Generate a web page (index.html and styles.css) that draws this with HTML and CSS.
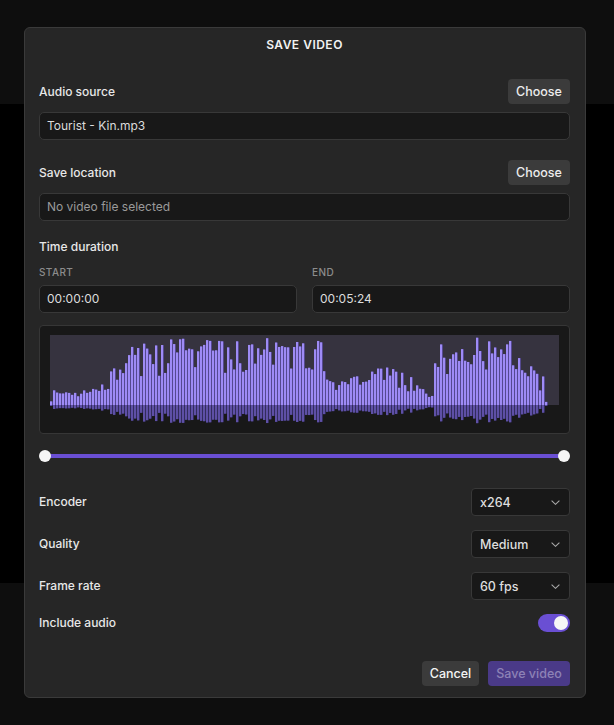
FILE: index.html
```html
<!DOCTYPE html>
<html lang="en">
<head>
<meta charset="utf-8">
<title>Save video</title>
<link rel="stylesheet" href="styles.css">
<script src="script.js" defer></script>
</head>
<body>
<div class="app">
  <div class="app-top"></div>
  <div class="app-main"></div>
  <div class="app-bottom"></div>
</div>

<div class="modal">
  <h2 class="modal-title">SAVE VIDEO</h2>

  <div class="field-head">
    <span class="label">Audio source</span>
    <button class="btn">Choose</button>
  </div>
  <div class="input">Tourist - Kin.mp3</div>

  <div class="field-head second">
    <span class="label">Save location</span>
    <button class="btn">Choose</button>
  </div>
  <div class="input placeholder">No video file selected</div>

  <div class="label duration-label">Time duration</div>
  <div class="time-grid">
    <div class="time-col">
      <div class="sublabel">START</div>
      <div class="input">00:00:00</div>
    </div>
    <div class="time-col">
      <div class="sublabel">END</div>
      <div class="input">00:05:24</div>
    </div>
  </div>

  <div class="wave-box">
    <svg id="wave" class="wave" viewBox="0 0 509 89" width="509" height="89" preserveAspectRatio="none">
      <rect x="0" y="0" width="509" height="70" fill="#36333f"></rect>
    </svg>
  </div>

  <div class="range">
    <div class="range-track"></div>
    <span class="thumb thumb-start"></span>
    <span class="thumb thumb-end"></span>
  </div>

  <div class="settings">
    <div class="setting-row">
      <span class="label">Encoder</span>
      <div class="select"><span>x264</span>
        <svg class="chev" viewBox="0 0 9 5" width="9" height="5"><polyline points="0.6,0.6 4.5,4.3 8.4,0.6" fill="none" stroke="#a8a8a8" stroke-width="1.1"/></svg>
      </div>
    </div>
    <div class="setting-row">
      <span class="label">Quality</span>
      <div class="select"><span>Medium</span>
        <svg class="chev" viewBox="0 0 9 5" width="9" height="5"><polyline points="0.6,0.6 4.5,4.3 8.4,0.6" fill="none" stroke="#a8a8a8" stroke-width="1.1"/></svg>
      </div>
    </div>
    <div class="setting-row">
      <span class="label">Frame rate</span>
      <div class="select"><span>60 fps</span>
        <svg class="chev" viewBox="0 0 9 5" width="9" height="5"><polyline points="0.6,0.6 4.5,4.3 8.4,0.6" fill="none" stroke="#a8a8a8" stroke-width="1.1"/></svg>
      </div>
    </div>
  </div>

  <div class="toggle-row">
    <span class="label">Include audio</span>
    <span class="toggle"><span class="knob"></span></span>
  </div>

  <div class="actions">
    <button class="btn btn-cancel">Cancel</button>
    <button class="btn btn-primary">Save video</button>
  </div>
</div>
</body>
</html>
```

FILE: styles.css
```css
html, body {
  margin: 0;
  padding: 0;
}
body {
  width: 614px;
  height: 725px;
  overflow: hidden;
  position: relative;
  font-family: Inter, "Noto Sans", sans-serif;
  color: #e6e6e6;
  background: #000;
}
.app {
  display: flex;
  flex-direction: column;
  height: 725px;
}
.app-top { height: 104px; background: #0e0e0e; }
.app-main { height: 479px; background: #000; }
.app-bottom { flex: 1; background: #0e0e0e; }

.modal {
  position: absolute;
  left: 24px;
  top: 27px;
  width: 562px;
  box-sizing: border-box;
  background: #262626;
  border: 1px solid #3a3a3a;
  border-radius: 6px;
  padding: 0 15px 11px 14px;
}
.modal-title {
  margin: 0;
  padding-top: 9px;
  font-size: 12px;
  line-height: 16px;
  font-weight: 600;
  letter-spacing: 0.5px;
  text-align: center;
  color: #f2f2f2;
}
.label {
  font-size: 12px;
  font-weight: 500;
  color: #e8e8e8;
  line-height: 16px;
}
.field-head {
  margin-top: 26px;
  height: 25px;
  display: flex;
  align-items: center;
  justify-content: space-between;
}
.field-head.second { margin-top: 20px; }

.btn {
  font-family: inherit;
  font-size: 12.5px;
  font-weight: 500;
  height: 25px;
  border: none;
  border-radius: 4px;
  background: #3b3b3b;
  color: #ececec;
  padding: 0 8px;
  line-height: 25px;
  cursor: pointer;
}
.field-head .btn { width: 62px; padding: 0; }

.input {
  margin-top: 8px;
  height: 28px;
  box-sizing: border-box;
  background: #181818;
  border: 1px solid #383838;
  border-radius: 5px;
  padding: 0 7px;
  font-size: 12px;
  line-height: 26px;
  color: #dcdcdc;
}
.input.placeholder { color: #9a9a9a; }

.duration-label {
  display: block;
  margin-top: 18px;
}
.time-grid {
  margin-top: 11px;
  display: grid;
  grid-template-columns: 1fr 1fr;
  column-gap: 15px;
}
.sublabel {
  font-size: 10px;
  line-height: 12px;
  font-weight: 500;
  letter-spacing: 0.4px;
  color: #8c8c8c;
}
.time-col .input { margin-top: 7px; }

.wave-box {
  margin-top: 12px;
  height: 109px;
  box-sizing: border-box;
  background: #181818;
  border: 1px solid #363636;
  border-radius: 4px;
  padding: 9px 10px;
}
.wave {
  display: block;
  width: 509px;
  height: 89px;
}

.range {
  position: relative;
  margin-top: 16px;
  height: 12px;
  padding: 0 6px;
  display: flex;
  align-items: center;
}
.range-track {
  flex: 1;
  height: 4px;
  border-radius: 2px;
  background: #6a4fd3;
}
.thumb {
  position: absolute;
  top: 0;
  width: 12px;
  height: 12px;
  border-radius: 50%;
  background: #f6f6f6;
}
.thumb-start { left: 0; }
.thumb-end { right: 0; }

.settings {
  margin-top: 26px;
  display: flex;
  flex-direction: column;
  gap: 14px;
}
.setting-row {
  height: 28px;
  display: flex;
  align-items: center;
  justify-content: space-between;
}
.select {
  width: 99px;
  height: 28px;
  box-sizing: border-box;
  background: #181818;
  border: 1px solid #383838;
  border-radius: 4px;
  padding: 0 9px 0 8px;
  display: flex;
  align-items: center;
  justify-content: space-between;
  font-size: 12.5px;
  font-weight: 500;
  color: #dedede;
}
.chev { display: block; }

.toggle-row {
  margin-top: 14px;
  height: 18px;
  display: flex;
  align-items: center;
  justify-content: space-between;
}
.toggle {
  width: 32px;
  height: 18px;
  border-radius: 9px;
  background: #6a4fd3;
  display: flex;
  align-items: center;
  justify-content: flex-end;
  padding: 0 2px;
  box-sizing: border-box;
}
.knob {
  width: 14px;
  height: 14px;
  border-radius: 50%;
  background: #f6f6f6;
}

.actions {
  margin-top: 29px;
  display: flex;
  justify-content: flex-end;
  gap: 9px;
}
.btn-cancel { width: 57px; padding: 0; color: #f4f4f4; }
.btn-primary {
  width: 82px;
  padding: 0;
  background: #4a3a88;
  color: #8d82b6;
}
```

FILE: script.js
```js
(function () {
  var svg = document.getElementById('wave');
  if (!svg) return;
  var NS = 'http://www.w3.org/2000/svg';
  var pts = [
    [50,4],[52,16],[60,13],[75,13],[88,19],[99,19],[101,34],[115,40],[121,54],
    [131,66],[145,62],[165,64],[172,68],[300,68],[321,66],[323,34],[330,24],
    [340,32],[360,38],[390,38],[405,32],[418,22],[430,16],[432,3],[434,50],
    [438,63],[470,69],[495,66],[510,64],[520,48],[535,36],[542,30],[545,4]
  ];
  function env(x) {
    for (var i = 0; i < pts.length - 1; i++) {
      var a = pts[i], b = pts[i + 1];
      if (x >= a[0] && x <= b[0]) {
        var t = (x - a[0]) / (b[0] - a[0] || 1);
        return a[1] + (b[1] - a[1]) * t;
      }
    }
    return 0;
  }
  var seed = 987654;
  function rnd() {
    seed = (seed * 16807) % 2147483647;
    return seed / 2147483647;
  }
  var base = 70;
  function rect(x, y, w, h, fill) {
    var r = document.createElementNS(NS, 'rect');
    r.setAttribute('x', x);
    r.setAttribute('y', y);
    r.setAttribute('width', w);
    r.setAttribute('height', h);
    r.setAttribute('fill', fill);
    svg.appendChild(r);
  }
  for (var ax = 50; ax <= 546; ax += 3) {
    var e = env(ax);
    var h = Math.max(1.5, e * (0.42 + 0.58 * Math.pow(rnd(), 0.6)));
    var x = ax - 50;
    var rh = h * 0.27;
    rect(x, base - h, 3, h, '#554990');
    rect(x, base - h, 2, h, '#9e8bf5');
    rect(x, base, 3, rh, '#322c5c');
    rect(x, base, 2, rh, '#5e50a6');
  }
})();
```
